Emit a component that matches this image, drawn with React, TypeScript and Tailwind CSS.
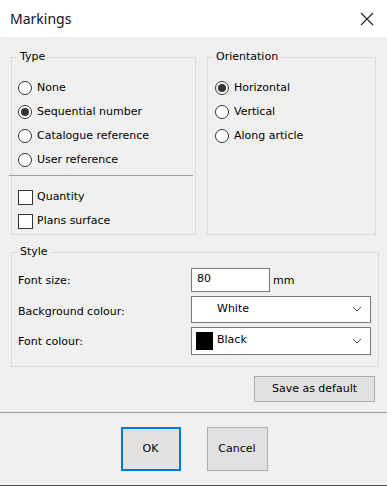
import { useState } from "react";

const font = { fontFamily: '"DejaVu Sans", Tahoma, sans-serif' };

const Radio = ({ label, checked, onClick }: { label: string; checked?: boolean; onClick?: () => void }) => (
  <div className="flex h-6 items-center gap-[5px] cursor-default" onClick={onClick}>
    <span className="flex h-[14px] w-[14px] items-center justify-center rounded-full border border-[#333] bg-white">
      {checked && <span className="h-[8px] w-[8px] rounded-full bg-[#333]" />}
    </span>
    <span>{label}</span>
  </div>
);

const Check = ({ label }: { label: string }) => (
  <div className="flex h-6 items-center gap-[4px]">
    <span className="h-[15px] w-[15px] border border-[#333] bg-white" />
    <span>{label}</span>
  </div>
);

const Chevron = () => (
  <svg width="10" height="6" viewBox="0 0 10 6" className="text-[#555]">
    <path d="M1 1l4 4 4-4" fill="none" stroke="currentColor" strokeWidth="1" />
  </svg>
);

export default function App() {
  const [type, setType] = useState("Sequential number");
  const [orient, setOrient] = useState("Horizontal");

  return (
    <div className="flex h-[486px] w-[387px] flex-col overflow-hidden bg-[#f0f0f0] text-[11px] leading-[14px] text-black" style={font}>
      {/* title bar */}
      <div className="flex h-[37px] items-center justify-between bg-white pl-[10px] pr-[13px]">
        <span className="text-[14px] text-[#111]" style={{ fontFamily: '"Noto Sans", sans-serif' }}>
          Markings
        </span>
        <svg width="14" height="14" viewBox="0 0 14 14">
          <path d="M1 1l12 12M13 1L1 13" stroke="#222" strokeWidth="1.1" />
        </svg>
      </div>

      <div className="flex flex-1 flex-col px-[11px] pt-[13px]">
        <div className="flex gap-[11px]">
          <fieldset className="h-[185px] w-[186px] border border-[#dcdcdc] pl-[6px] pr-[2px]">
            <legend className="px-[2px]">Type</legend>
            <div className="pt-[12px]">
              {["None", "Sequential number", "Catalogue reference", "User reference"].map((t) => (
                <Radio key={t} label={t} checked={type === t} onClick={() => setType(t)} />
              ))}
            </div>
            <div className="-ml-[9px] mt-[3px] mb-[9px] h-px w-[184px] bg-[#a0a0a0]" />
            <Check label="Quantity" />
            <Check label="Plans surface" />
          </fieldset>

          <fieldset className="h-[185px] w-[171px] border border-[#dcdcdc] pl-[6px]">
            <legend className="px-[2px]">Orientation</legend>
            <div className="pt-[12px] pl-[1px]">
              {["Horizontal", "Vertical", "Along article"].map((t) => (
                <Radio key={t} label={t} checked={orient === t} onClick={() => setOrient(t)} />
              ))}
            </div>
          </fieldset>
        </div>

        <fieldset className="mt-[10px] h-[122px] w-[368px] border border-[#dcdcdc] pl-[6px] pr-[7px]">
          <legend className="px-[2px]">Style</legend>
          <div className="flex flex-col gap-[4px] pt-[9px]">
            <div className="flex h-[24px] items-center">
              <span className="w-[173px] pt-[2px]">Font size:</span>
              <div className="flex h-[24px] w-[79px] items-start border border-[#7a7a7a] bg-white px-[5px] pt-[3px]">80</div>
              <span className="ml-[3px] pt-[2px]">mm</span>
            </div>
            <div className="flex h-[27px] items-center">
              <span className="w-[173px] pt-[4px]">Background colour:</span>
              <div className="flex h-[27px] w-[180px] items-center justify-between border border-[#7a7a7a] bg-white pl-[25px] pr-[8px] pb-[2px]">
                <span>White</span>
                <Chevron />
              </div>
            </div>
            <div className="flex h-[28px] items-center">
              <span className="w-[173px] pt-[2px]">Font colour:</span>
              <div className="flex h-[28px] w-[180px] items-center justify-between border border-[#7a7a7a] bg-white pl-[4px] pr-[8px]">
                <div className="flex items-center gap-[4px]">
                  <span className="h-[18px] w-[17px] bg-black" />
                  <span className="pb-[3px]">Black</span>
                </div>
                <Chevron />
              </div>
            </div>
          </div>
        </fieldset>

        <div className="mt-[9px] flex justify-end pr-[1px]">
          <button className="h-[26px] w-[121px] border border-[#adadad] bg-[#e1e1e1]">Save as default</button>
        </div>
      </div>

      <div className="h-px bg-[#a0a0a0]" />
      <div className="flex h-[72px] items-start justify-center gap-[26px] pt-[14px] pl-[1px]">
        <button className="h-[44px] w-[60px] border-2 border-[#0078d7] bg-[#e1e1e1]">OK</button>
        <button className="h-[44px] w-[61px] border border-[#adadad] bg-[#e1e1e1]">Cancel</button>
      </div>
      <div className="h-px bg-[#555]" />
    </div>
  );
}
